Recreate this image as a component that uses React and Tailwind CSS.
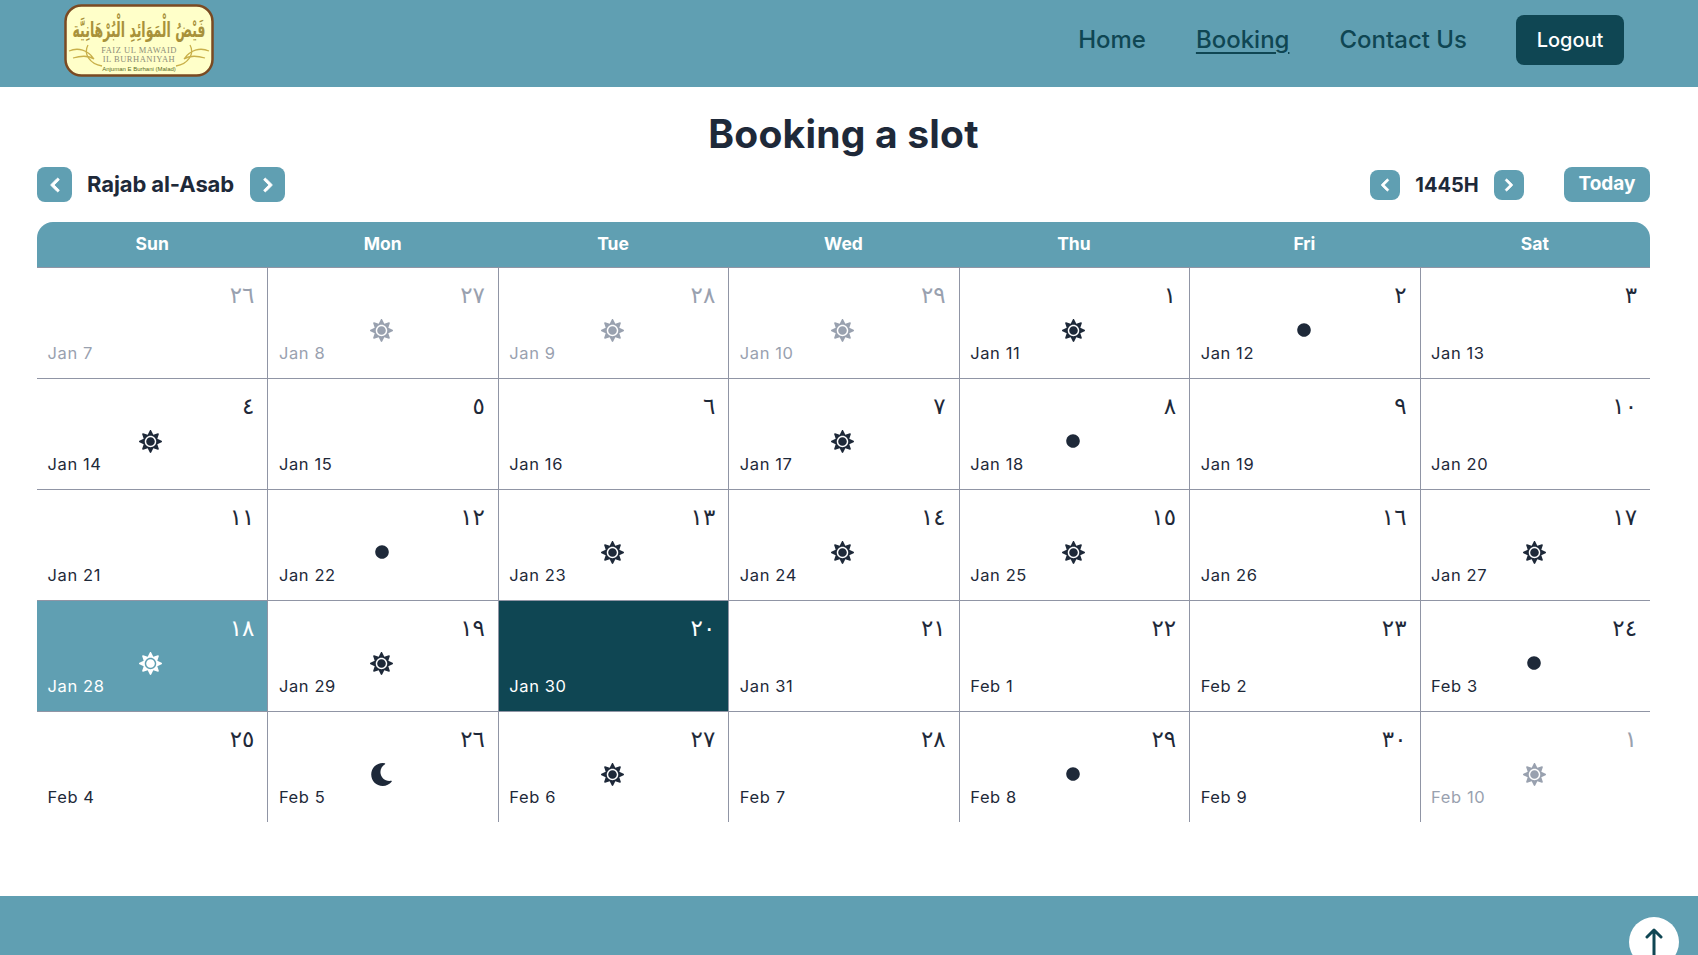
import { FaChevronLeft, FaChevronRight, FaSun, FaMoon, FaCircle } from "react-icons/fa";

const days = ["Sun", "Mon", "Tue", "Wed", "Thu", "Fri", "Sat"];

const cells = [
  { h: "٢٦", d: "Jan 7", muted: true },
  { h: "٢٧", d: "Jan 8", muted: true, icon: "sun" },
  { h: "٢٨", d: "Jan 9", muted: true, icon: "sun" },
  { h: "٢٩", d: "Jan 10", muted: true, icon: "sun" },
  { h: "١", d: "Jan 11", icon: "sun" },
  { h: "٢", d: "Jan 12", icon: "dot" },
  { h: "٣", d: "Jan 13" },
  { h: "٤", d: "Jan 14", icon: "sun" },
  { h: "٥", d: "Jan 15" },
  { h: "٦", d: "Jan 16" },
  { h: "٧", d: "Jan 17", icon: "sun" },
  { h: "٨", d: "Jan 18", icon: "dot" },
  { h: "٩", d: "Jan 19" },
  { h: "١٠", d: "Jan 20" },
  { h: "١١", d: "Jan 21" },
  { h: "١٢", d: "Jan 22", icon: "dot" },
  { h: "١٣", d: "Jan 23", icon: "sun" },
  { h: "١٤", d: "Jan 24", icon: "sun" },
  { h: "١٥", d: "Jan 25", icon: "sun" },
  { h: "١٦", d: "Jan 26" },
  { h: "١٧", d: "Jan 27", icon: "sun" },
  { h: "١٨", d: "Jan 28", icon: "sun", bg: "teal" },
  { h: "١٩", d: "Jan 29", icon: "sun" },
  { h: "٢٠", d: "Jan 30", bg: "dark" },
  { h: "٢١", d: "Jan 31" },
  { h: "٢٢", d: "Feb 1" },
  { h: "٢٣", d: "Feb 2" },
  { h: "٢٤", d: "Feb 3", icon: "dot" },
  { h: "٢٥", d: "Feb 4" },
  { h: "٢٦", d: "Feb 5", icon: "moon" },
  { h: "٢٧", d: "Feb 6", icon: "sun" },
  { h: "٢٨", d: "Feb 7" },
  { h: "٢٩", d: "Feb 8", icon: "dot" },
  { h: "٣٠", d: "Feb 9" },
  { h: "١", d: "Feb 10", muted: true, icon: "sun" },
];

const Logo = () => (
  <svg width="150" height="73" viewBox="0 0 150 73" className="block">
    <rect x="1.5" y="1.5" width="147" height="70" rx="16" fill="#ffffc9" stroke="#7a4a22" strokeWidth="2.5" />
    <g transform="translate(75 33) scale(1 1.7)">
      <text x="0" y="0" textAnchor="middle" fontFamily="'DejaVu Sans', serif" fontWeight="700" fontSize="12.5" fill="#a8913a" direction="rtl">
        فَيْضُ الْمَوَائِدِ الْبُرْهَانِيَّة
      </text>
    </g>
    <text x="75" y="49" textAnchor="middle" fontFamily="'Liberation Serif', serif" fontSize="8.5" letterSpacing="0.5" fill="#8d8d78">
      FAIZ UL MAWAID
    </text>
    <text x="75" y="58" textAnchor="middle" fontFamily="'Liberation Serif', serif" fontSize="8.5" letterSpacing="0.5" fill="#8d8d78">
      IL BURHANIYAH
    </text>
    <text x="75" y="67" textAnchor="middle" fontFamily="'Liberation Sans', sans-serif" fontSize="6" fill="#5c6b1e">
      Anjuman E Burhani (Malad)
    </text>
    <path d="M5 47 C 14 43, 24 46, 30 55 C 24 51, 16 52, 9 54" fill="none" stroke="#c9b04a" strokeWidth="1.3" />
    <path d="M24 41 C 19 50, 26 60, 38 62" fill="none" stroke="#c9b04a" strokeWidth="1.3" />
    <path d="M145 47 C 136 43, 126 46, 120 55 C 126 51, 134 52, 141 54" fill="none" stroke="#c9b04a" strokeWidth="1.3" />
    <path d="M126 41 C 131 50, 124 60, 112 62" fill="none" stroke="#c9b04a" strokeWidth="1.3" />
  </svg>
);

const DayIcon = ({ type }) => {
  if (type === "sun") return <FaSun className="w-[23px] h-[23px]" />;
  if (type === "moon") return <FaMoon className="w-[23px] h-[23px]" />;
  if (type === "dot") return <FaCircle className="w-[14px] h-[14px]" />;
  return null;
};

const Cell = ({ cell, index }) => {
  let color = "text-gray-800";
  if (cell.muted) color = "text-gray-400";
  let bg = "";
  if (cell.bg === "teal") {
    bg = "bg-[#609fb2]";
    color = "text-white";
  }
  if (cell.bg === "dark") {
    bg = "bg-[#0f4653]";
    color = "text-white";
  }
  const firstCol = index % 7 === 0;
  return (
    <div className={`h-[111px] border-t border-[#9095a5] ${firstCol ? "" : "border-l"} ${bg} ${color} flex flex-col pt-[9px] pl-[10.5px] pr-[13px]`}>
      <div className="h-[36px] text-right text-[23px] leading-[36px] tracking-[5px] font-['DejaVu_Sans',sans-serif]">{cell.h}</div>
      <div className="h-[26px] mt-[4px] flex items-center justify-center">
        <DayIcon type={cell.icon} />
      </div>
      <div className="h-[24px] -mt-[2px] text-[16.5px] leading-[24px] tracking-[0.6px] font-['Inter',sans-serif]">{cell.d}</div>
    </div>
  );
};

export default function App() {
  return (
    <div className="h-[955px] overflow-hidden flex flex-col bg-white font-['Inter',sans-serif] text-gray-800">
      {/* Header */}
      <header className="h-[87px] shrink-0 bg-[#609fb2] flex items-center justify-between pl-[64px] pr-[74px] pb-[7px]">
        <Logo />
        <nav className="flex items-center text-[#0f4653] text-[24px] font-medium">
          <a className="mr-[50px]">Home</a>
          <a className="mr-[50px] underline underline-offset-4">Booking</a>
          <a className="mr-[49px]">Contact Us</a>
          <button className="w-[108px] h-[50px] rounded-lg bg-[#0f4653] text-white text-[20px] font-medium">Logout</button>
        </nav>
      </header>

      {/* Calendar */}
      <main className="flex-1 pl-[37px] pr-[48px]">
        <h1 className="text-center text-[39px] tracking-[0.2px] font-bold leading-[46px] mt-[24px]">Booking a slot</h1>
        <div className="flex items-center justify-between mt-[10px] h-[35px]">
          <div className="flex items-center">
            <button className="w-[35px] h-[35px] rounded-lg bg-[#609fb2] text-white flex items-center justify-center">
              <FaChevronLeft className="w-[16px] h-[16px]" stroke="currentColor" strokeWidth={30} />
            </button>
            <span className="w-[178px] pl-[15px] text-[22px] font-bold tracking-[-0.1px]">Rajab al-Asab</span>
            <button className="w-[35px] h-[35px] rounded-lg bg-[#609fb2] text-white flex items-center justify-center">
              <FaChevronRight className="w-[16px] h-[16px]" stroke="currentColor" strokeWidth={30} />
            </button>
          </div>
          <div className="flex items-center">
            <button className="w-[30px] h-[30px] rounded-lg bg-[#609fb2] text-white flex items-center justify-center">
              <FaChevronLeft className="w-[14px] h-[14px]" stroke="currentColor" strokeWidth={30} />
            </button>
            <span className="w-[94px] text-center text-[20px] font-bold">1445H</span>
            <button className="w-[30px] h-[30px] rounded-lg bg-[#609fb2] text-white flex items-center justify-center">
              <FaChevronRight className="w-[14px] h-[14px]" stroke="currentColor" strokeWidth={30} />
            </button>
            <button className="ml-[40px] w-[86px] h-[35px] rounded-lg bg-[#609fb2] text-white text-[19px] font-bold">Today</button>
          </div>
        </div>
        <div className="mt-[20px] grid grid-cols-7 h-[45px] rounded-t-2xl bg-[#609fb2] text-white text-[17.5px] font-bold">
          {days.map((day) => (
            <div key={day} className="flex items-center justify-center">{day}</div>
          ))}
        </div>
        <div className="grid grid-cols-7">
          {cells.map((cell, i) => (
            <Cell key={cell.d} cell={cell} index={i} />
          ))}
        </div>
      </main>

      {/* Footer */}
      <footer className="relative h-[59px] shrink-0 bg-[#609fb2]">
        <button className="absolute right-[19px] top-[21px] w-[50px] h-[50px] rounded-full bg-white flex items-start justify-center pt-[11px]">
          <svg width="20" height="34" viewBox="0 0 20 34" fill="none" stroke="#0f4653" strokeWidth="3" strokeLinecap="round" strokeLinejoin="round">
            <path d="M10 2 V34 M3 9 L10 2 L17 9" />
          </svg>
        </button>
      </footer>
    </div>
  );
}
